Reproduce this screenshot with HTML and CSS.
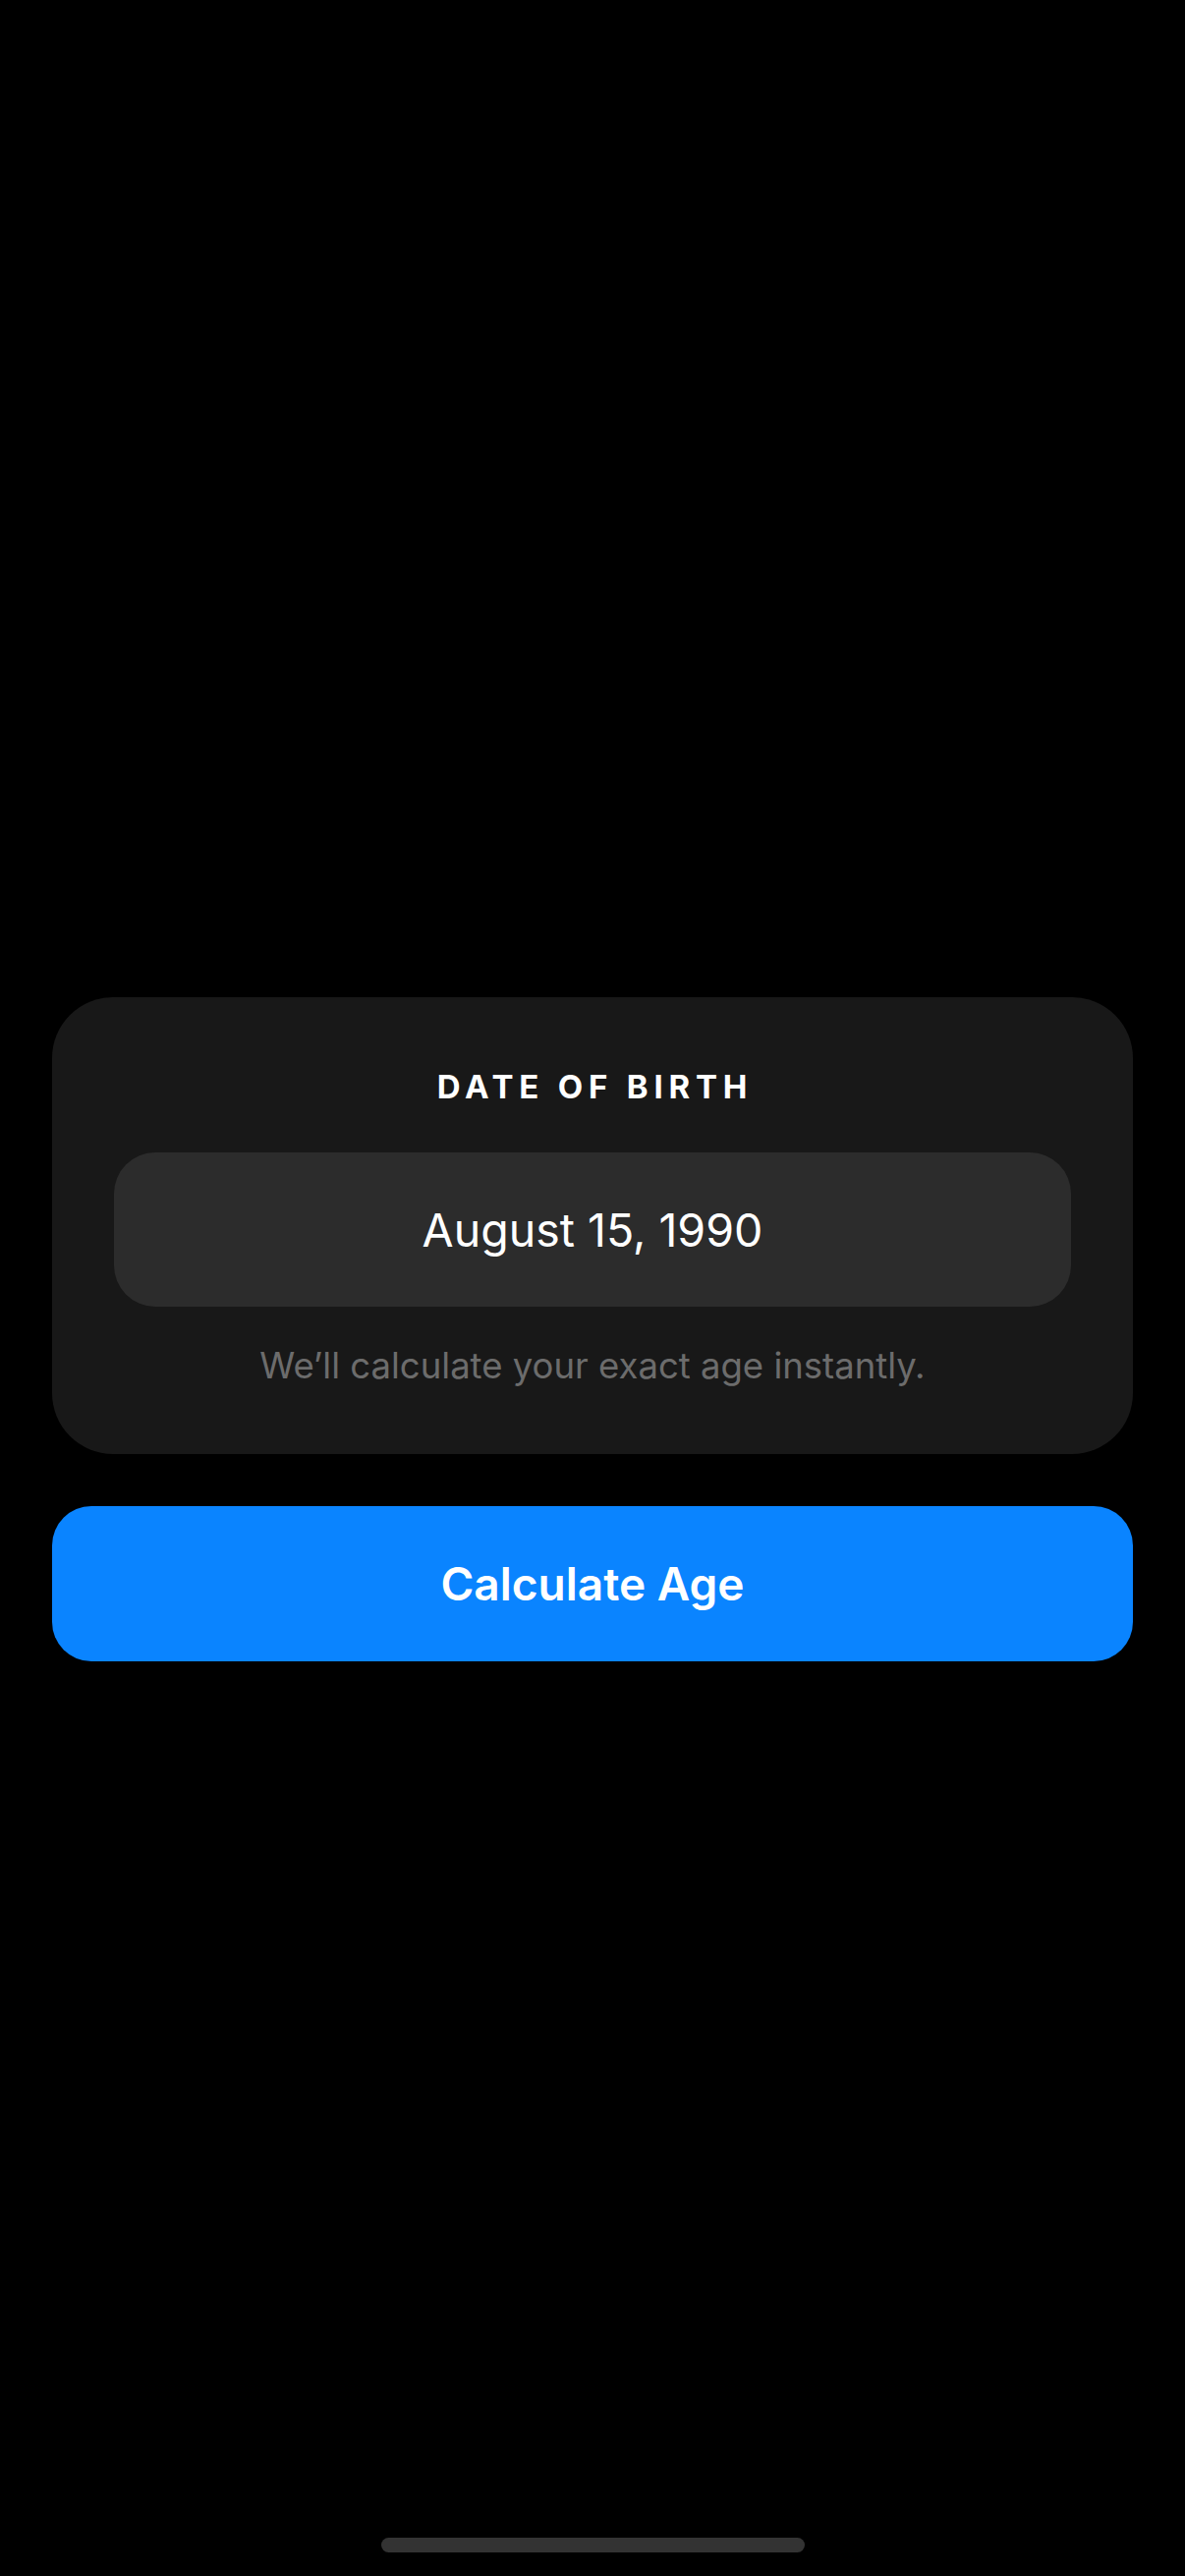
FILE: index.html
```html
<!DOCTYPE html>
<html lang="en">
<head>
<meta charset="utf-8">
<title>Age Calculator</title>
<link rel="stylesheet" href="styles.css">
</head>
<body>
<div class="screen">
  <main class="content">
    <section class="card">
      <h2 class="label">DATE OF BIRTH</h2>
      <div class="date-field">August 15, 1990</div>
      <p class="hint">We’ll calculate your exact age instantly.</p>
    </section>
    <button class="primary">Calculate Age</button>
  </main>
  <div class="home-indicator"></div>
</div>
</body>
</html>
```

FILE: styles.css
```css
* { box-sizing: border-box; }
html, body {
  margin: 0;
  padding: 0;
  background: #000;
}
body {
  font-family: Inter, "Noto Sans", "Liberation Sans", sans-serif;
  color: #fff;
}
.screen {
  width: 1206px;
  height: 2622px;
  display: flex;
  flex-direction: column;
  align-items: center;
}
.content {
  width: 1100px;
  margin-top: 1015px;
  display: flex;
  flex-direction: column;
  gap: 53px;
}
.card {
  background: #181818;
  border-radius: 62px;
  padding: 71px 64px 68px;
  display: flex;
  flex-direction: column;
  align-items: center;
}
.label {
  margin: 0 0 0 5px;
  font-size: 33px;
  line-height: 40px;
  font-weight: 700;
  letter-spacing: 5.8px;
  color: #fff;
}
.date-field {
  margin-top: 47px;
  width: 974px;
  height: 157px;
  background: #2c2c2c;
  border-radius: 42px;
  display: flex;
  align-items: center;
  justify-content: center;
  font-size: 46.5px;
  font-weight: 400;
  color: #fff;
}
.hint {
  margin: 38px 0 0;
  font-size: 36.5px;
  line-height: 44px;
  color: #6c6c6c;
}
.primary {
  height: 158px;
  border: 0;
  border-radius: 40px;
  background: #0a84ff;
  color: #fff;
  font-family: inherit;
  font-size: 46px;
  font-weight: 600;
  padding: 0;
}
.home-indicator {
  margin-top: auto;
  margin-bottom: 24px;
  width: 431px;
  height: 15px;
  border-radius: 8px;
  background: #333;
}
```
